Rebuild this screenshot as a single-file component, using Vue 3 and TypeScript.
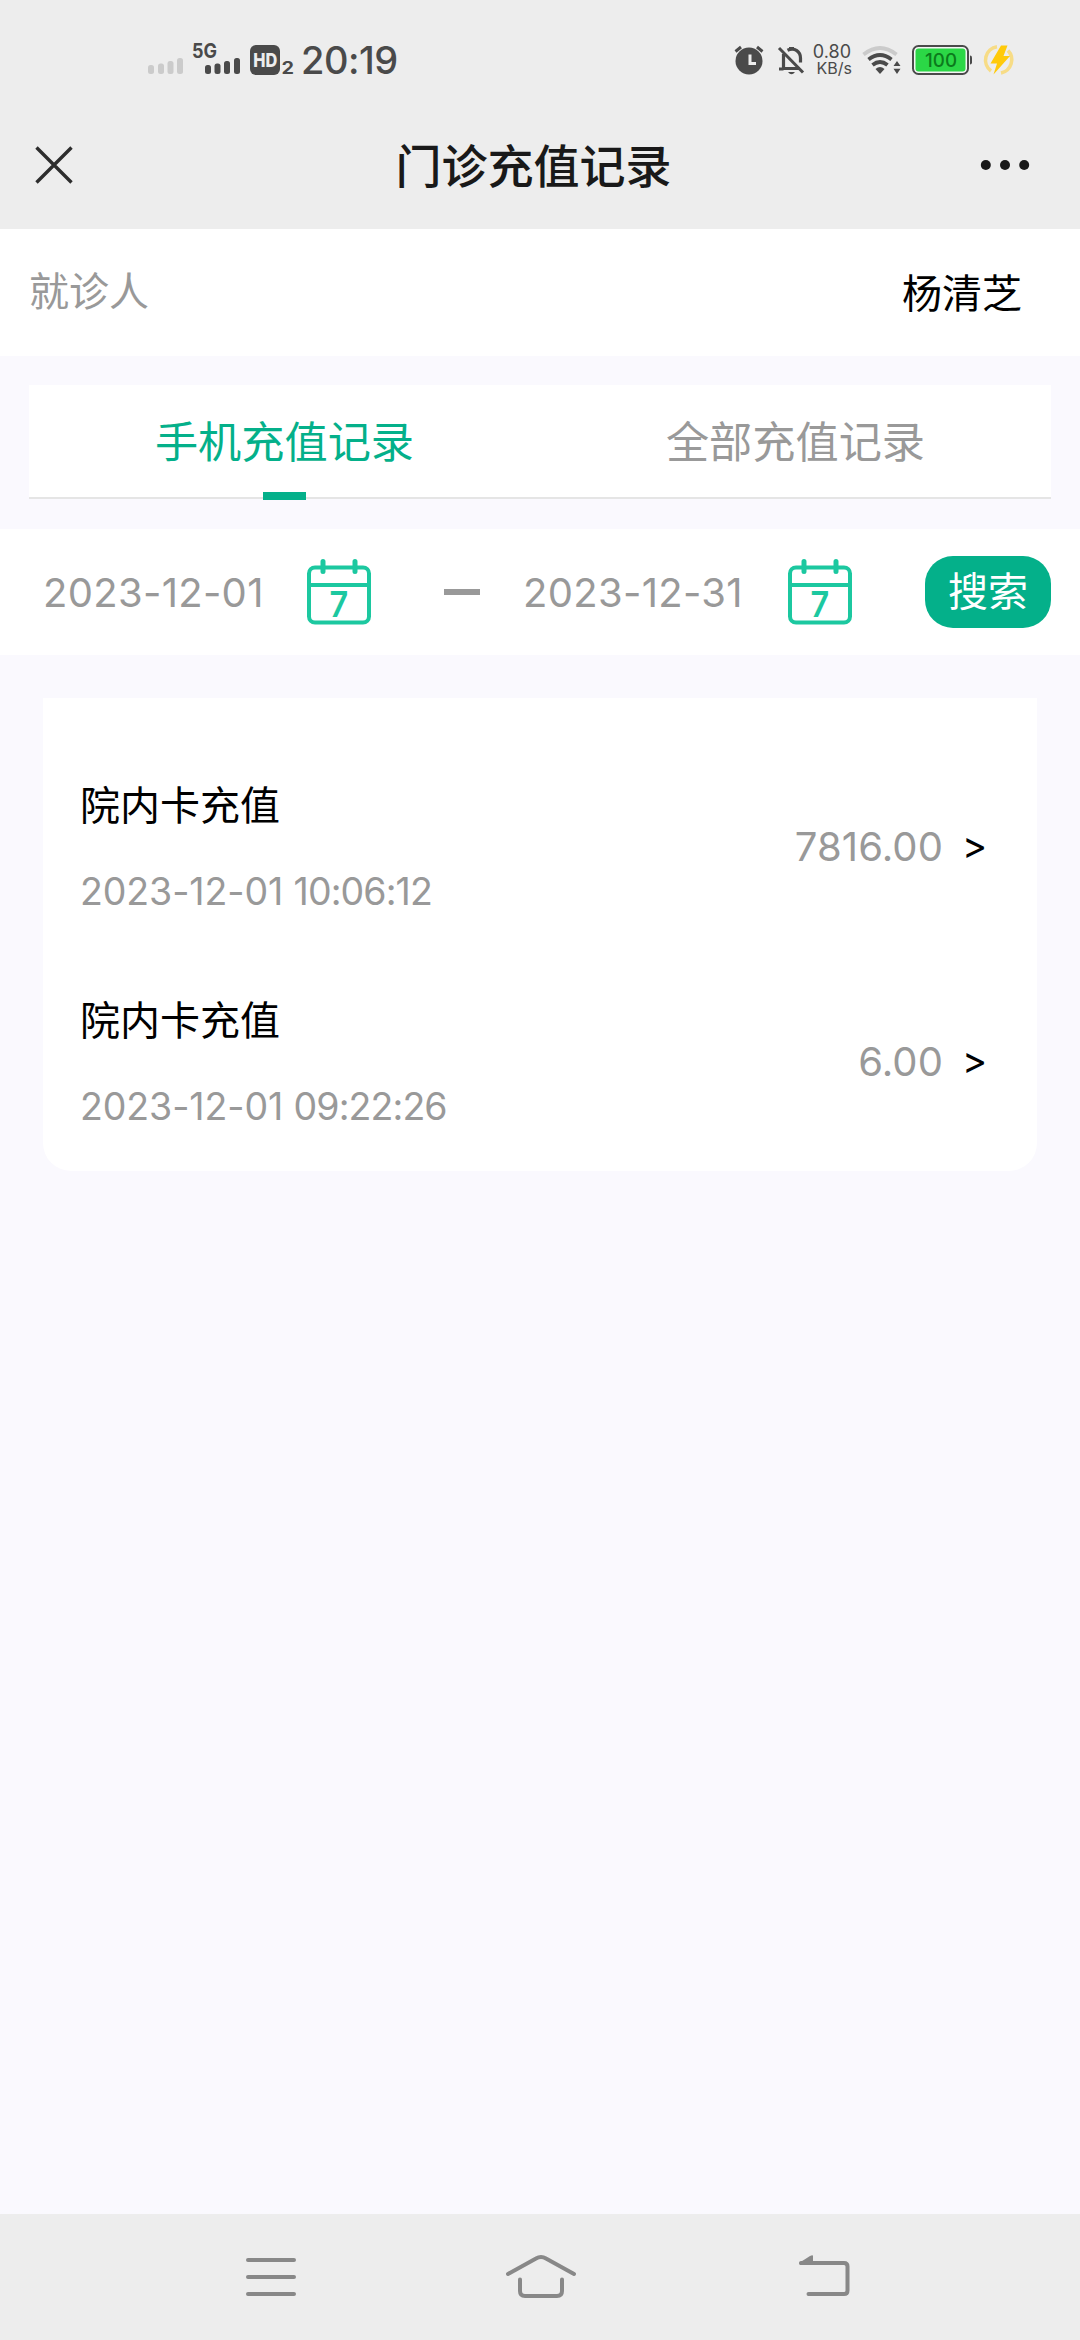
<script setup lang="ts">
import { ref } from 'vue'

interface RechargeRecord {
  title: string
  date: string
  time: string
  amount: string
}

const patient = '杨清芝'
const tabs = ['手机充值记录', '全部充值记录']
const activeTab = ref(0)
const startDate = ref('2023-12-01')
const endDate = ref('2023-12-31')

const records: RechargeRecord[] = [
  { title: '院内卡充值', date: '2023-12-01', time: '10:06:12', amount: '7816.00' },
  { title: '院内卡充值', date: '2023-12-01', time: '09:22:26', amount: '6.00' },
]
</script>

<template>
  <div class="screen">
    <header class="top">
      <div class="status">
        <svg class="signals" width="94" height="40" viewBox="0 -4 94 40">
          <g fill="#cbcbcb">
            <rect x="0" y="24" width="6" height="9" rx="2.5" />
            <rect x="10" y="22.5" width="6" height="10.5" rx="2.5" />
            <rect x="19.5" y="20" width="6" height="13" rx="2.5" />
            <rect x="29" y="17" width="6" height="16" rx="2.5" />
          </g>
          <g fill="#4a4a4a">
            <rect x="57" y="24" width="6" height="9" rx="2.5" />
            <rect x="66.5" y="22.5" width="6" height="10.5" rx="2.5" />
            <rect x="76" y="20" width="6" height="13" rx="2.5" />
            <rect x="86" y="17" width="6" height="16" rx="2.5" />
            <text x="44" y="16.8" class="net" textLength="25" lengthAdjust="spacingAndGlyphs">5G</text>
          </g>
        </svg>
        <svg class="hd" width="44" height="36" viewBox="0 0 44 36">
          <rect x="0" y="4" width="30" height="30" rx="6" fill="#4a4a4a" />
          <text x="3.2" y="26" class="hd-text" textLength="24" lengthAdjust="spacingAndGlyphs">HD</text>
          <text x="31.5" y="33" class="sim" textLength="12.5" lengthAdjust="spacingAndGlyphs">2</text>
        </svg>
        <span class="clock">20:19</span>

        <svg class="alarm" width="30" height="30" viewBox="0 0 30 30">
          <circle cx="15" cy="16" r="13.5" fill="#4a4a4a" />
          <path d="M1.500 6.500 7 2M28.500 6.500 23 2" stroke="#4a4a4a" stroke-width="3" fill="none" />
          <path d="M16 9.500v9h6" stroke="#ededed" stroke-width="3" fill="none" />
        </svg>
        <svg class="bell" width="28" height="30" viewBox="0 0 28 30">
          <path d="M5.500 9v14.500h16" fill="none" stroke="#4a4a4a" stroke-width="3.200" />
          <path d="M9.500 5.300C17 1.800 22.500 7 22.500 13v4.500" fill="none" stroke="#4a4a4a" stroke-width="3.200" />
          <path d="M1 24h4.500M11 3.500h5" stroke="#4a4a4a" stroke-width="3" />
          <path d="M1 3 25 27.500" stroke="#4a4a4a" stroke-width="3" />
          <path d="M10 27h7q-3.500 4.500-7 0z" fill="#4a4a4a" />
        </svg>
        <div class="speed">
          <span class="rate">0.80</span>
          <span class="unit">KB/s</span>
        </div>
        <svg class="wifi" width="40" height="30" viewBox="0 0 40 30">
          <g fill="none" stroke-width="3.800">
            <path d="M1.500 9.500Q18 -3.500 34.500 9.500" stroke="#cbcbcb" />
            <path d="M6.500 14.500Q18 5.500 29.500 14.500" stroke="#4a4a4a" />
            <path d="M10.500 20Q18 14 25.500 20" stroke="#4a4a4a" />
          </g>
          <path d="M13.500 24q4.500-3.800 9 0L18 29z" fill="#4a4a4a" />
          <path d="M31.500 21 35 16l3.500 5zM31.500 23.800h7L35 29z" fill="#4a4a4a" />
        </svg>
        <svg class="battery" width="60" height="30" viewBox="0 0 60 30">
          <rect x="1" y="1" width="55" height="28" rx="5.500" fill="#f4f4f4" stroke="#4a4a4a" stroke-width="2" />
          <rect x="3.500" y="3.500" width="50" height="23" rx="3" fill="#2bd746" />
          <path d="M58 10.500q2 0 2 2v5q0 2-2 2z" fill="#4a4a4a" />
          <text x="13" y="21.800" class="level" textLength="32" lengthAdjust="spacingAndGlyphs">100</text>
        </svg>
        <svg class="bolt" width="32" height="32" viewBox="0 0 32 32">
          <path d="M14 2.800A13.500 13.500 0 0 0 8 27" fill="none" stroke="#f7dc86" stroke-width="3.600" />
          <path d="M25 6.500A13.500 13.500 0 0 1 18 29" fill="none" stroke="#f7dc86" stroke-width="3.600" />
          <path d="M18 1.500h6.500L20.500 12H27L10.500 30.500 14 19.500H7.500z" fill="#ffca0a" />
        </svg>
      </div>

      <div class="nav">
        <svg width="40" height="40" viewBox="0 0 40 40">
          <path d="M2.500 2.500 37.500 37.500M37.500 2.500 2.500 37.500" stroke="#2d2d2d" stroke-width="3.400" />
        </svg>
        <h1>门诊充值记录</h1>
        <svg width="50" height="12" viewBox="0 0 50 12">
          <g fill="#191919">
            <circle cx="5.800" cy="6" r="5" />
            <circle cx="25" cy="6" r="5" />
            <circle cx="44.200" cy="6" r="5" />
          </g>
        </svg>
      </div>
    </header>

    <main>
      <section class="patient">
        <span class="label">就诊人</span>
        <span class="name">{{ patient }}</span>
      </section>

      <nav class="tabs">
        <button
          v-for="(tab, i) in tabs"
          :key="tab"
          :class="['tab', { active: i === activeTab }]"
          @click="activeTab = i"
        >
          {{ tab }}
        </button>
      </nav>

      <section class="filter">
        <div class="date">
          <span>{{ startDate }}</span>
          <svg width="66" height="66" viewBox="0 0 66 66">
            <g fill="none" stroke="#1cc8a0" stroke-width="4">
              <rect x="3" y="8.500" width="60" height="55" rx="6" />
              <path d="M3 26h60" />
              <path d="M17 2.500v10M49 2.500v10" stroke-width="5" stroke-linecap="round" />
            </g>
            <text x="23.5" y="58" class="day" textLength="19" lengthAdjust="spacingAndGlyphs">7</text>
          </svg>
        </div>
        <i class="dash"></i>
        <div class="date end">
          <span>{{ endDate }}</span>
          <svg width="66" height="66" viewBox="0 0 66 66">
            <g fill="none" stroke="#1cc8a0" stroke-width="4">
              <rect x="3" y="8.500" width="60" height="55" rx="6" />
              <path d="M3 26h60" />
              <path d="M17 2.500v10M49 2.500v10" stroke-width="5" stroke-linecap="round" />
            </g>
            <text x="23.5" y="58" class="day" textLength="19" lengthAdjust="spacingAndGlyphs">7</text>
          </svg>
        </div>
        <button class="search">搜索</button>
      </section>

      <section class="card">
        <article v-for="item in records" :key="item.time" class="record">
          <div class="info">
            <div class="title">{{ item.title }}</div>
            <div class="time">{{ item.date }} <span class="hms">{{ item.time }}</span></div>
          </div>
          <span class="amount">{{ item.amount }}</span>
          <span class="arrow">&gt;</span>
        </article>
      </section>
    </main>

    <footer class="system-bar">
      <svg width="50" height="44" viewBox="0 0 50 44">
        <path d="M2 5h46M2 22h46M2 39h46" stroke="#888" stroke-width="4" stroke-linecap="round" />
      </svg>
      <svg class="home" width="70" height="44" viewBox="0 0 70 44">
        <g fill="none" stroke="#888" stroke-width="4" stroke-linecap="round">
          <path d="M2 19 30 3.500Q35 .5 40 3.500L68 19" />
          <path d="M14 24.500V36q0 5 5 5h32q5 0 5-5V24.500" />
        </g>
      </svg>
      <svg width="52" height="44" viewBox="0 0 52 44">
        <path d="M3 8h43q3.500 0 3.500 3.500v24q0 3.500-3.500 3.500H10.500" fill="none" stroke="#888" stroke-width="4" stroke-linecap="round" />
        <path d="M1 8 12 1q3-1.500 3 0v9H2z" fill="#888" />
      </svg>
    </footer>
  </div>
</template>

<style>
body {
  margin: 0;
}
</style>

<style scoped>
.screen {
  display: flex;
  flex-direction: column;
  width: 1080px;
  height: 2340px;
  overflow: hidden;
  background: #faf9fe;
  color: #000;
  font-family: Inter, 'Noto Sans CJK SC', sans-serif;
}
svg {
  display: block;
  flex: none;
  overflow: visible;
}
button {
  margin: 0;
  padding: 0;
  border: 0;
  background: none;
  font-family: inherit;
}
.top {
  height: 229px;
  background: #ededed;
}
.status {
  display: flex;
  align-items: center;
  box-sizing: border-box;
  height: 100px;
  padding: 20px 0 0 148px;
  color: #4a4a4a;
}
.signals {
  margin-top: -6px;
}
.hd {
  margin-top: -2px;
  margin-left: 8px;
}
.net {
  font: 700 20px Inter, sans-serif;
}
.hd-text {
  fill: #ededed;
  font: 800 19px Inter, sans-serif;
}
.sim {
  fill: #4a4a4a;
  font: 700 17px Inter, sans-serif;
}
.clock {
  width: 97px;
  margin-left: 7px;
  font-size: 38px;
  font-weight: 500;
  letter-spacing: -0.5px;
  line-height: 40px;
  white-space: nowrap;
}
.alarm {
  margin-left: 336px;
}
.bell {
  margin-left: 14px;
}
.speed {
  display: flex;
  flex-direction: column;
  align-items: flex-end;
  width: 42px;
  margin-left: 4px;
  white-space: nowrap;
}
.rate {
  margin-right: 1px;
  font-size: 18px;
  line-height: 16px;
}
.unit {
  font-size: 16px;
  line-height: 16px;
}
.wifi {
  margin-left: 10px;
}
.battery {
  margin-left: 10px;
}
.level {
  fill: #0c7a1c;
  font: 500 19px Inter, sans-serif;
}
.bolt {
  margin-left: 11px;
}
.nav {
  display: flex;
  align-items: center;
  justify-content: space-between;
  height: 129px;
  padding: 0 50px 0 34px;
}
.nav h1 {
  margin: 2px 0 0 13px;
  color: #191919;
  font-size: 46px;
  font-weight: 500;
  line-height: 60px;
}
.patient {
  display: flex;
  align-items: center;
  justify-content: space-between;
  height: 127px;
  padding: 0 58px 0 29px;
  background: #fff;
  font-size: 40px;
  line-height: 50px;
}
.label {
  margin-bottom: 2px;
  color: #999;
}
.name {
  margin-top: 2px;
}
.tabs {
  display: flex;
  box-sizing: border-box;
  height: 114px;
  margin: 29px 29px 30px;
  border-bottom: 2px solid #e5e5e5;
  background: #fff;
}
.tab {
  position: relative;
  flex: 1;
  padding-top: 2px;
  color: #999;
  font-size: 43.2px;
  line-height: 110px;
}
.tab.active {
  color: #04b08a;
}
.tab.active::after {
  content: '';
  position: absolute;
  bottom: -3px;
  left: 50%;
  width: 43px;
  height: 8px;
  margin-left: -22px;
  background: #04b08a;
}
.filter {
  display: flex;
  align-items: center;
  box-sizing: border-box;
  height: 126px;
  padding: 0 29px 0 43px;
  background: #fff;
}
.date {
  display: flex;
  align-items: center;
  justify-content: space-between;
  width: 329px;
  color: #999;
  font-size: 40px;
  letter-spacing: 0.3px;
  white-space: nowrap;
}
.day {
  fill: #1cc8a0;
  font: 600 36px Inter, sans-serif;
}
.dash {
  width: 36px;
  height: 6px;
  margin: 0 43px 0 72px;
  background: #999;
}
.end {
  width: 330px;
}
.search {
  width: 126px;
  height: 72px;
  margin-left: auto;
  border-radius: 28px;
  background: #04b08a;
  color: #fff;
  font-size: 40px;
  line-height: 70px;
}
.card {
  box-sizing: border-box;
  height: 473px;
  margin: 43px 43px 0;
  padding: 43px 50px 0 37px;
  border-radius: 0 0 28px 28px;
  background: #fff;
}
.record {
  display: flex;
  align-items: center;
  height: 215px;
}
.info {
  flex: 1;
}
.title {
  font-size: 40px;
  line-height: 60px;
}
.time {
  margin-top: 26px;
  color: #999;
  font-size: 37.5px;
  letter-spacing: -0.1px;
  line-height: 60px;
}
.hms {
  letter-spacing: -0.9px;
}
.amount {
  margin-bottom: 4px;
  color: #999;
  font-size: 40px;
  letter-spacing: 0.1px;
}
.arrow {
  width: 25px;
  margin: 0 0 8px 19px;
  font-size: 38px;
}
.system-bar {
  display: flex;
  justify-content: space-between;
  box-sizing: border-box;
  height: 126px;
  margin-top: auto;
  padding: 41px 230px 0 246px;
  background: #ededed;
}
.home {
  margin-right: 12px;
}
</style>
